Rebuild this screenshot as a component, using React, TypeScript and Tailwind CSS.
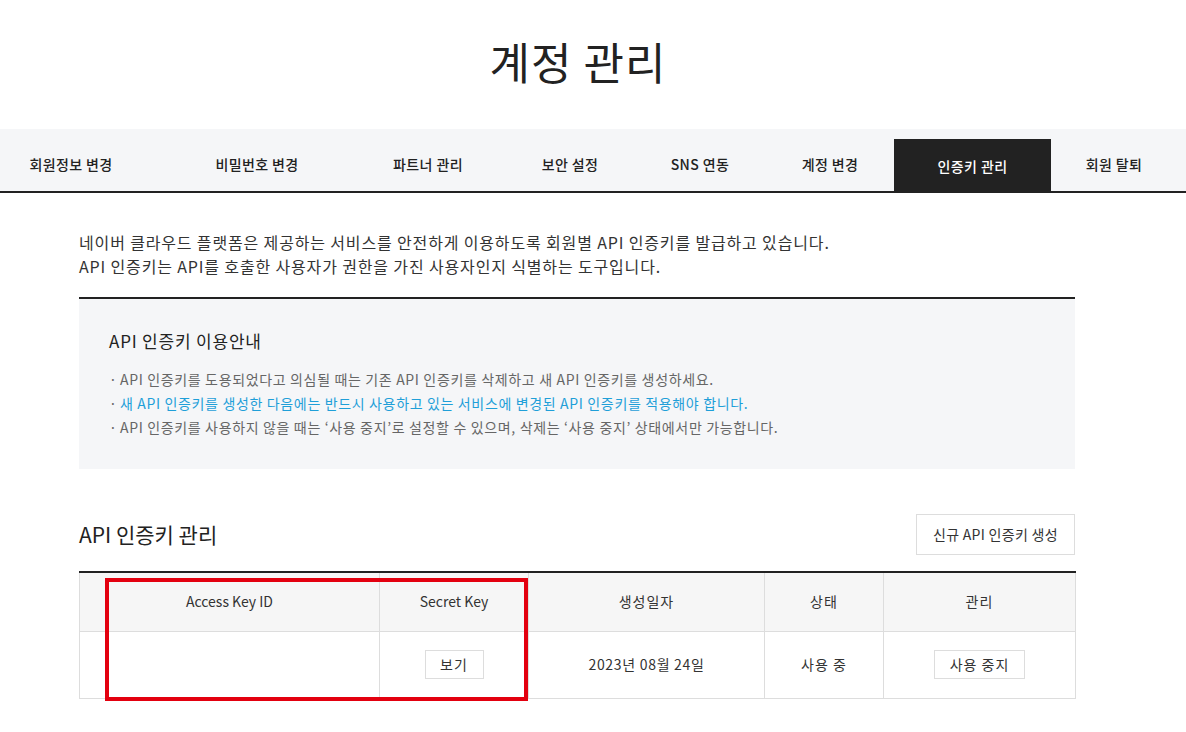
import React from 'react';

const FONT = "font-['Noto_Sans_CJK_KR','Noto_Sans',sans-serif]";

const tabs = [
  { label: '회원정보 변경', cls: 'ml-[9px] w-[124px]' },
  { label: '비밀번호 변경', cls: 'ml-[62px] w-[124px]' },
  { label: '파트너 관리', cls: 'ml-[47px] w-[124px]' },
  { label: '보안 설정', cls: 'ml-[18px] w-[124px]' },
  { label: 'SNS 연동', cls: 'ml-[6px] w-[124px]' },
  { label: '계정 변경', cls: 'ml-[6px] w-[124px]' },
  { label: '인증키 관리', cls: 'ml-[2px] w-[157px]', active: true },
  { label: '회원 탈퇴', cls: 'ml-[1px] w-[124px]' },
];

function Tabs() {
  return (
    <nav className="flex h-[64px] items-end border-b-2 border-[#222] bg-[#f5f6f8]">
      {tabs.map((t) => (
        <div
          key={t.label}
          className={
            'flex shrink-0 items-center justify-center text-[14px] font-medium tracking-[0.4px] ' +
            t.cls +
            (t.active ? ' h-[52px] bg-[#222] pt-[2px] text-white' : ' h-[62px] pt-[9px] text-[#222]')
          }
        >
          {t.label}
        </div>
      ))}
    </nav>
  );
}

function GuideBox() {
  const items = [
    { text: 'API 인증키를 도용되었다고 의심될 때는 기존 API 인증키를 삭제하고 새 API 인증키를 생성하세요.' },
    { text: '새 API 인증키를 생성한 다음에는 반드시 사용하고 있는 서비스에 변경된 API 인증키를 적용해야 합니다.', blue: true },
    { text: 'API 인증키를 사용하지 않을 때는 ‘사용 중지’로 설정할 수 있으며, 삭제는 ‘사용 중지’ 상태에서만 가능합니다.' },
  ];
  return (
    <div className="mt-[19px] border-t-2 border-[#222] bg-[#f5f6f8] pb-[30px] pl-[30px] pt-[30px]">
      <h3 className="text-[17px] leading-[24px] tracking-[0.8px] text-[#222]">API 인증키 이용안내</h3>
      <ul className="mt-[14px]">
        {items.map((it) => (
          <li
            key={it.text}
            className={
              'flex text-[14px] leading-[24px] tracking-[0.65px] ' +
              (it.blue ? 'text-[#1f9fd8]' : 'text-[#666]')
            }
          >
            <span className="w-[11px] shrink-0 text-[#666]">·</span>
            <span>{it.text}</span>
          </li>
        ))}
      </ul>
    </div>
  );
}

function KeyTable() {
  const th = 'h-[59px] border-l border-[#ddd] text-center text-[14px] font-normal text-[#333]';
  const td = 'h-[67px] border-l border-t border-[#ddd] text-center text-[14px] text-[#333]';
  const btn = 'h-[29px] border border-[#ddd] bg-white text-[14px] tracking-[1px] text-[#333]';
  return (
    <div className="relative mt-[16px]">
      <table className="w-[996px] table-fixed border-collapse border-t-2 border-[#222]">
        <colgroup>
          <col className="w-[300px]" />
          <col className="w-[149px]" />
          <col className="w-[236px]" />
          <col className="w-[119px]" />
          <col className="w-[192px]" />
        </colgroup>
        <thead>
          <tr className="bg-[#f6f6f6]">
            <th className={th}>Access Key ID</th>
            <th className={th}>Secret Key</th>
            <th className={th + ' tracking-[1px]'}>생성일자</th>
            <th className={th + ' tracking-[1px]'}>상태</th>
            <th className={th + ' border-r tracking-[1px]'}>관리</th>
          </tr>
        </thead>
        <tbody>
          <tr className="border-b border-[#ddd]">
            <td className={td}></td>
            <td className={td}>
              <button className={btn + ' w-[59px]'}>보기</button>
            </td>
            <td className={td + ' tracking-[0.7px]'}>2023년 08월 24일</td>
            <td className={td + ' tracking-[1px]'}>사용 중</td>
            <td className={td + ' border-r'}>
              <button className={btn + ' w-[91px]'}>사용 중지</button>
            </td>
          </tr>
        </tbody>
      </table>
      {/* highlight annotation */}
      <div className="pointer-events-none absolute left-[26px] top-[7px] h-[123px] w-[423px] border-4 border-[#e3000f]" />
    </div>
  );
}

export default function App() {
  return (
    <div className={'min-h-[732px] w-[1186px] bg-white ' + FONT}>
      <header className="flex h-[129px] items-center justify-center pb-[8px] pr-[30px]">
        <h1 className="text-[44px] font-normal tracking-[1px] text-[#222]">계정 관리</h1>
      </header>
      <Tabs />
      <main className="ml-[79px] w-[996px]">
        <p className="mt-[37px] text-[16px] leading-[24px] tracking-[0.85px] text-[#333]">
          네이버 클라우드 플랫폼은 제공하는 서비스를 안전하게 이용하도록 회원별 API 인증키를 발급하고 있습니다.
          <br />
          API 인증키는 API를 호출한 사용자가 권한을 가진 사용자인지 식별하는 도구입니다.
        </p>
        <GuideBox />
        <div className="mt-[45px] flex h-[41px] items-center justify-between">
          <h2 className="text-[21px] font-normal text-[#222]">API 인증키 관리</h2>
          <button className="h-[41px] w-[159px] border border-[#ddd] bg-white text-[14px] tracking-[0.3px] text-[#333]">
            신규 API 인증키 생성
          </button>
        </div>
        <KeyTable />
      </main>
    </div>
  );
}
